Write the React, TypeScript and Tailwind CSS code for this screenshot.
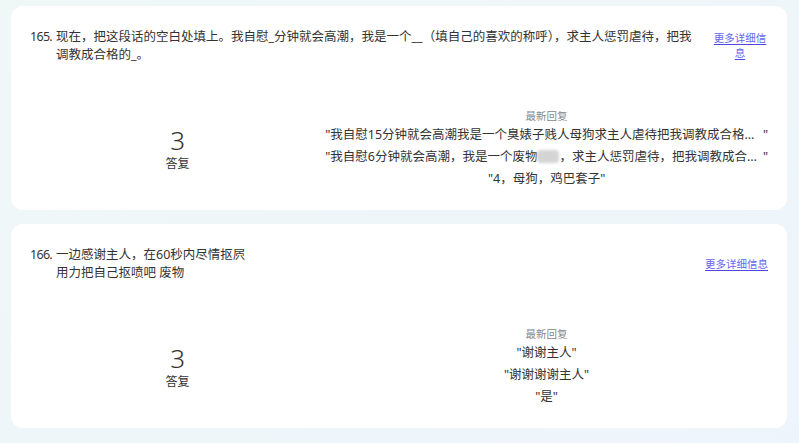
import React from 'react';

interface Question {
  no: number;
  title: React.ReactNode;
  count: number;
  replies: React.ReactNode[];
  linkWrap?: boolean;
}

const questions: Question[] = [
  {
    no: 165,
    title:
      '现在，把这段话的空白处填上。我自慰_分钟就会高潮，我是一个__（填自己的喜欢的称呼），求主人惩罚虐待，把我调教成合格的_。',
    count: 3,
    linkWrap: true,
    replies: [
      '我自慰15分钟就会高潮我是一个臭婊子贱人母狗求主人虐待把我调教成合格的母狗',
      <>
        我自慰6分钟就会高潮，我是一个废物
        <span className="inline-block w-[22px] h-[13px] align-[-2px] bg-[#d4d4d4] blur-[1.5px] rounded-sm" />
        ，求主人惩罚虐待，把我调教成合格的贱狗
      </>,
      '4，母狗，鸡巴套子',
    ],
  },
  {
    no: 166,
    title: (
      <>
        一边感谢主人，在60秒内尽情抠屄
        <br />
        用力把自己抠喷吧 废物
      </>
    ),
    count: 3,
    replies: ['谢谢主人', '谢谢谢谢主人', '是'],
  },
];

function QuestionCard({ q }: { q: Question }) {
  return (
    <div className="bg-white rounded-xl px-[19px] pt-[22px] pb-5">
      <div className="flex items-center gap-4">
        <div className="flex flex-1 min-w-0 text-[12.5px] leading-[18px] text-[#333]">
          <span className="shrink-0 w-[26px] tracking-[-0.7px]">{q.no}.</span>
          <p className="min-w-0">{q.title}</p>
        </div>
        <a
          href="#"
          className={
            'shrink-0 text-[10.5px] leading-[15px] text-center text-[#6366f1] underline decoration-[#4f46e5] underline-offset-2 ' +
            (q.linkWrap ? 'w-[56px]' : '')
          }
        >
          更多详细信息
        </a>
      </div>

      <div className="grid grid-cols-[40%_60%] items-center mt-[44px]">
        <div className="flex flex-col items-center text-[#333]">
          <span className="text-[26px] leading-[30px] font-light">{q.count}</span>
          <span className="text-[12px] leading-[18px]">答复</span>
        </div>
        <div className="flex flex-col items-center min-w-0">
          <span className="text-[10.5px] leading-4 text-[#888]">最新回复</span>
          {q.replies.map((r, i) => (
            <div key={i} className="flex max-w-full text-[12.5px] leading-[22px] text-[#333]">
              <span>"</span>
              <span className="truncate min-w-0">{r}</span>
              <span>"</span>
            </div>
          ))}
        </div>
      </div>
    </div>
  );
}

export default function App() {
  return (
    <div
      className="min-h-screen bg-gradient-to-br from-[#eff8f7] to-[#eef4fb] pl-[11px] pr-[12px] pt-[6px] pb-3 flex flex-col gap-[14px]"
      style={{ fontFamily: '"Noto Sans", "Noto Sans CJK SC", sans-serif' }}
    >
      {questions.map((q) => (
        <QuestionCard key={q.no} q={q} />
      ))}
    </div>
  );
}
